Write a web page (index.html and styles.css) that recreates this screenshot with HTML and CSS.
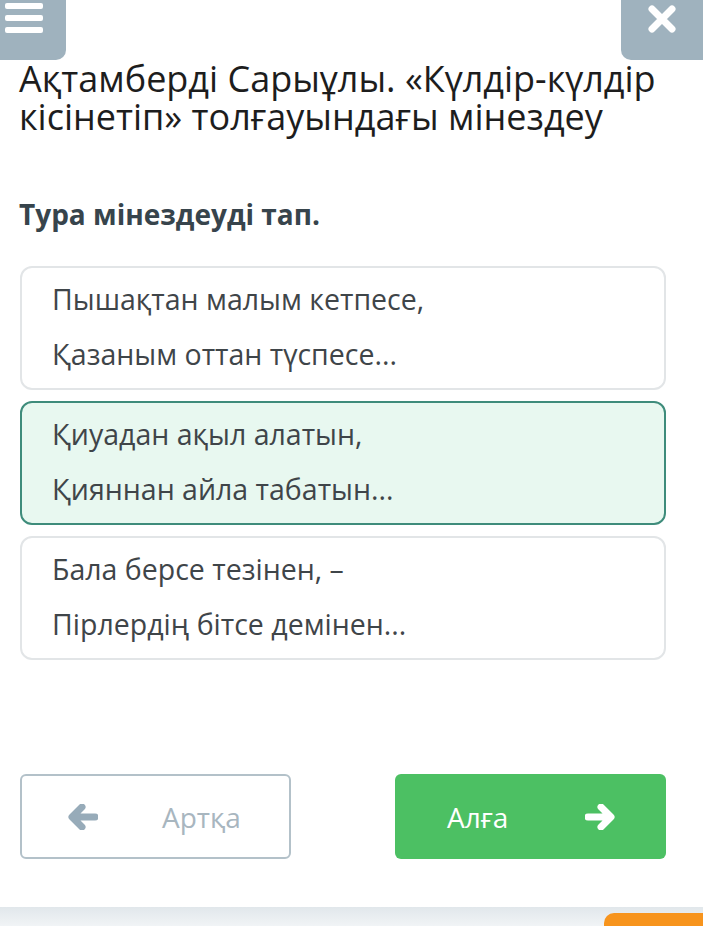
FILE: index.html
```html
<!DOCTYPE html>
<html lang="kk">
<head>
    <meta charset="UTF-8">
    <meta name="viewport" content="width=device-width, initial-scale=1.0">
    <title>Тура мінездеуді тап</title>
    <link rel="stylesheet" href="styles.css">
</head>
<body>
    <header class="topbar">
        <button class="corner-btn menu-btn" aria-label="Menu">
            <span></span><span></span><span></span>
        </button>
        <button class="corner-btn close-btn" aria-label="Close">
            <svg width="30" height="30" viewBox="0 0 30 30">
                <path d="M5 5 L25 25 M25 5 L5 25" stroke="#fff" stroke-width="7" stroke-linecap="round"/>
            </svg>
        </button>
    </header>

    <main class="quiz">
        <h1 class="quiz-title">Ақтамберді Сарыұлы. «Күлдір-күлдір кісінетіп» толғауындағы мінездеу</h1>
        <h2 class="question">Тура мінездеуді тап.</h2>

        <div class="options">
            <div class="option">
                <p>Пышақтан малым кетпесе,</p>
                <p>Қазаным оттан түспесе...</p>
            </div>
            <div class="option selected">
                <p>Қиуадан ақыл алатын,</p>
                <p>Қияннан айла табатын...</p>
            </div>
            <div class="option">
                <p>Бала берсе тезінен, –</p>
                <p>Пірлердің бітсе демінен...</p>
            </div>
        </div>

        <div class="nav">
            <button class="nav-btn back">
                <svg width="30" height="26" viewBox="0 0 30 26">
                    <path d="M14 3 L4 13 L14 23 M5 13 L27 13" fill="none" stroke="#97abb9" stroke-width="7" stroke-linecap="round" stroke-linejoin="round"/>
                </svg>
                <span>Артқа</span>
            </button>
            <button class="nav-btn next">
                <span>Алға</span>
                <svg width="30" height="26" viewBox="0 0 30 26">
                    <path d="M16 3 L26 13 L16 23 M25 13 L3 13" fill="none" stroke="#fff" stroke-width="7" stroke-linecap="round" stroke-linejoin="round"/>
                </svg>
            </button>
        </div>
    </main>

    <footer class="bottombar">
        <div class="orange-tab"></div>
    </footer>
</body>
</html>
```

FILE: styles.css
```css
body {
    margin: 0;
    font-family: "Open Sans", "Noto Sans", sans-serif;
    background-color: #fff;
    color: #222;
}

/* Top bar */
.topbar {
    display: flex;
    justify-content: space-between;
    height: 60px;
}

.corner-btn {
    border: none;
    background-color: #9fb2be;
    padding: 0;
    cursor: pointer;
}

.menu-btn {
    width: 66px;
    height: 60px;
    border-bottom-right-radius: 10px;
    display: flex;
    flex-direction: column;
    gap: 6px;
    padding: 3px 0 0 5px;
}

.menu-btn span {
    display: block;
    width: 38px;
    height: 6px;
    border-radius: 2px;
    background-color: #fff;
}

.close-btn {
    width: 82px;
    height: 60px;
    border-bottom-left-radius: 10px;
    display: flex;
    justify-content: center;
    padding-top: 4px;
}

/* Quiz */
.quiz {
    padding: 0 37px 0 19px;
}

.quiz-title {
    font-size: 36px;
    font-weight: 400;
    line-height: 38px;
    margin: 0;
    color: #1d1d1d;
}

.question {
    font-size: 28px;
    font-weight: 700;
    color: #37444c;
    margin: 60px 0 34px;
    line-height: 36px;
}

.options {
    display: flex;
    flex-direction: column;
    gap: 11px;
    padding-left: 1px;
}

.option {
    border: 2px solid #e2e5e7;
    border-radius: 12px;
    padding: 4px 30px 6px;
    color: #3f4549;
}

.option p {
    margin: 0;
    font-size: 28.5px;
    line-height: 55px;
}

.option.selected {
    background-color: #e8f8f0;
    border-color: #3e8c7b;
}

/* Navigation */
.nav {
    display: flex;
    justify-content: space-between;
    margin-top: 114px;
    padding-left: 1px;
}

.nav-btn {
    width: 271px;
    height: 85px;
    border-radius: 6px;
    font-family: "Open Sans", sans-serif;
    font-size: 28px;
    display: flex;
    align-items: center;
    cursor: pointer;
}

.nav-btn.back {
    background-color: #fff;
    border: 2px solid #b3c1c9;
    color: #a8b6bf;
    padding: 0 0 0 46px;
    gap: 64px;
}

.nav-btn.next {
    background-color: #4cc063;
    border: none;
    color: #fff;
    padding: 0 0 0 52px;
    gap: 77px;
}

/* Bottom bar */
.bottombar {
    margin-top: 48px;
    height: 19px;
    background: linear-gradient(#e1e7eb, #f1f4f6);
    display: flex;
    justify-content: flex-end;
    align-items: flex-end;
}

.orange-tab {
    width: 99px;
    height: 13px;
    background-color: #f7941d;
    border-top-left-radius: 10px;
}
```
